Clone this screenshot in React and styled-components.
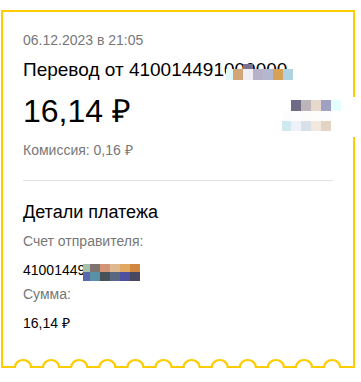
import React from "react";
import styled, { createGlobalStyle } from "styled-components";

const Global = createGlobalStyle`
  html, body { margin: 0; padding: 0; background: #fff; }
  body { font-family: "Liberation Sans", Arial, sans-serif; color: #000; }
`;

const Card = styled.div`
  position: relative;
  box-sizing: border-box;
  width: 354px;
  margin: 10px 0 0 1px;
  border: 2px solid #ffcc00;
  border-bottom: none;
  padding: 18px 20px 0;
`;

const DateText = styled.div`
  font-size: 14px;
  line-height: 20px;
  color: #777;
`;

const Title = styled.div`
  margin-top: 8px;
  font-size: 19px;
  line-height: 24px;
  white-space: nowrap;
`;

const Amount = styled.div`
  margin-top: 9px;
  font-size: 32px;
  line-height: 40px;
`;

const Fee = styled.div`
  margin-top: 9px;
  font-size: 14px;
  line-height: 20px;
  color: #777;
`;

const Divider = styled.hr`
  margin: 20px 0 0;
  border: none;
  height: 1px;
  background: #e3e0e0;
`;

const Heading = styled.div`
  margin-top: 19px;
  font-size: 18px;
  line-height: 24px;
`;

const Label = styled.div`
  margin-top: ${(p) => p.$gap}px;
  font-size: 14px;
  line-height: 20px;
  color: #777;
`;

const Value = styled.div`
  margin-top: 9px;
  font-size: 14px;
  line-height: 20px;
  white-space: nowrap;
`;

const Masked = styled.span`
  position: relative;
  display: inline-block;
`;

const Mosaic = styled.span`
  position: absolute;
  left: ${(p) => p.$left}px;
  top: ${(p) => p.$top}px;
  display: flex;
  flex-direction: column;
`;

const MosaicRow = styled.span`
  display: flex;
  height: ${(p) => p.$h}px;
`;

const Cell = styled.span`
  display: block;
  width: ${(p) => p.$w || 10}px;
  height: 100%;
  background: ${(p) => p.$c};
`;

const Speck = styled.span`
  position: absolute;
  left: ${(p) => p.$left}px;
  top: ${(p) => p.$top}px;
  width: 10px;
  height: 5px;
  background: ${(p) => p.$c};
`;

const Blob = styled.div`
  position: absolute;
  left: 279px;
  top: 85px;
  width: 77px;
  height: 40px;
  background: #fff;
  display: flex;
  flex-direction: column;
  padding-top: 3px;
  box-sizing: border-box;
`;

const Scallop = styled.svg`
  display: block;
  margin: 24px -20px 0;
  width: 350px;
  height: 11px;
`;

const rowCells = (cells) =>
  cells.map(([c, w], i) => <Cell key={i} $c={c} $w={w} />);

function ScallopLine() {
  let d = "M0 10";
  for (let k = 0; k < 12; k++) {
    const x = 12 + k * 28.1;
    d += ` L${x.toFixed(1)} 10 A8 7 0 0 1 ${(x + 16).toFixed(1)} 10`;
  }
  d += " L350 10";
  return (
    <Scallop viewBox="0 0 350 11" preserveAspectRatio="none">
      <path d={d} fill="none" stroke="#ffcc00" strokeWidth="2.2" />
    </Scallop>
  );
}

export default function App() {
  return (
    <>
      <Global />
      <Card>
        <DateText>06.12.2023 в 21:05</DateText>
        <Title>
          Перевод от 410014491
          <Masked>
            000000
            <Speck $left={19} $top={6} $c="#7a7490" />
            <Mosaic $left={2} $top={11}>
              <MosaicRow $h={11}>
                {rowCells([
                  ["#e2f8fa", 7],
                  ["#d2a676"],
                  ["#f0eef4"],
                  ["#b6b3c8"],
                  ["#b3b8d0"],
                  ["#d6a258"],
                  ["#aed4e2"],
                ])}
              </MosaicRow>
            </Mosaic>
          </Masked>
        </Title>
        <Amount>16,14 ₽</Amount>
        <Fee>Комиссия: 0,16 ₽</Fee>
        <Divider />
        <Heading>Детали платежа</Heading>
        <Label $gap={7}>Счет отправителя:</Label>
        <Value>
          <Masked>
            41001449
            <Mosaic $left={60} $top={4}>
              <MosaicRow $h={8}>
                {rowCells([
                  ["#a8c0b0", 7],
                  ["#807470"],
                  ["#d49478"],
                  ["#e0b890"],
                  ["#e0a860"],
                  ["#d08840"],
                ])}
              </MosaicRow>
              <MosaicRow $h={9}>
                {rowCells([
                  ["#5868a8", 7],
                  ["#5890a8"],
                  ["#485058"],
                  ["#586880"],
                  ["#5050a0"],
                  ["#484860"],
                ])}
              </MosaicRow>
            </Mosaic>
          </Masked>
        </Value>
        <Label $gap={4}>Сумма:</Label>
        <Value>16,14 ₽</Value>
        <ScallopLine />
        <Blob>
          <MosaicRow $h={11}>
            {rowCells([
              ["#fff", 9],
              ["#6e6c86"],
              ["#bcb4b8"],
              ["#e6d8cc"],
              ["#a0a0c4"],
              ["#e4fefe"],
            ])}
          </MosaicRow>
          <MosaicRow $h={10}>
            {rowCells([
              ["#fbfcfe", 9],
              ["#fdfdff"],
              ["#fcfcfd"],
              ["#fdfdfc"],
              ["#fcfcfe"],
            ])}
          </MosaicRow>
          <MosaicRow $h={10}>
            {rowCells([
              ["#cfe9ef", 9],
              ["#eef2f8"],
              ["#d8e0ea"],
              ["#f2e8de"],
              ["#e4d4c4"],
            ])}
          </MosaicRow>
        </Blob>
      </Card>
    </>
  );
}
